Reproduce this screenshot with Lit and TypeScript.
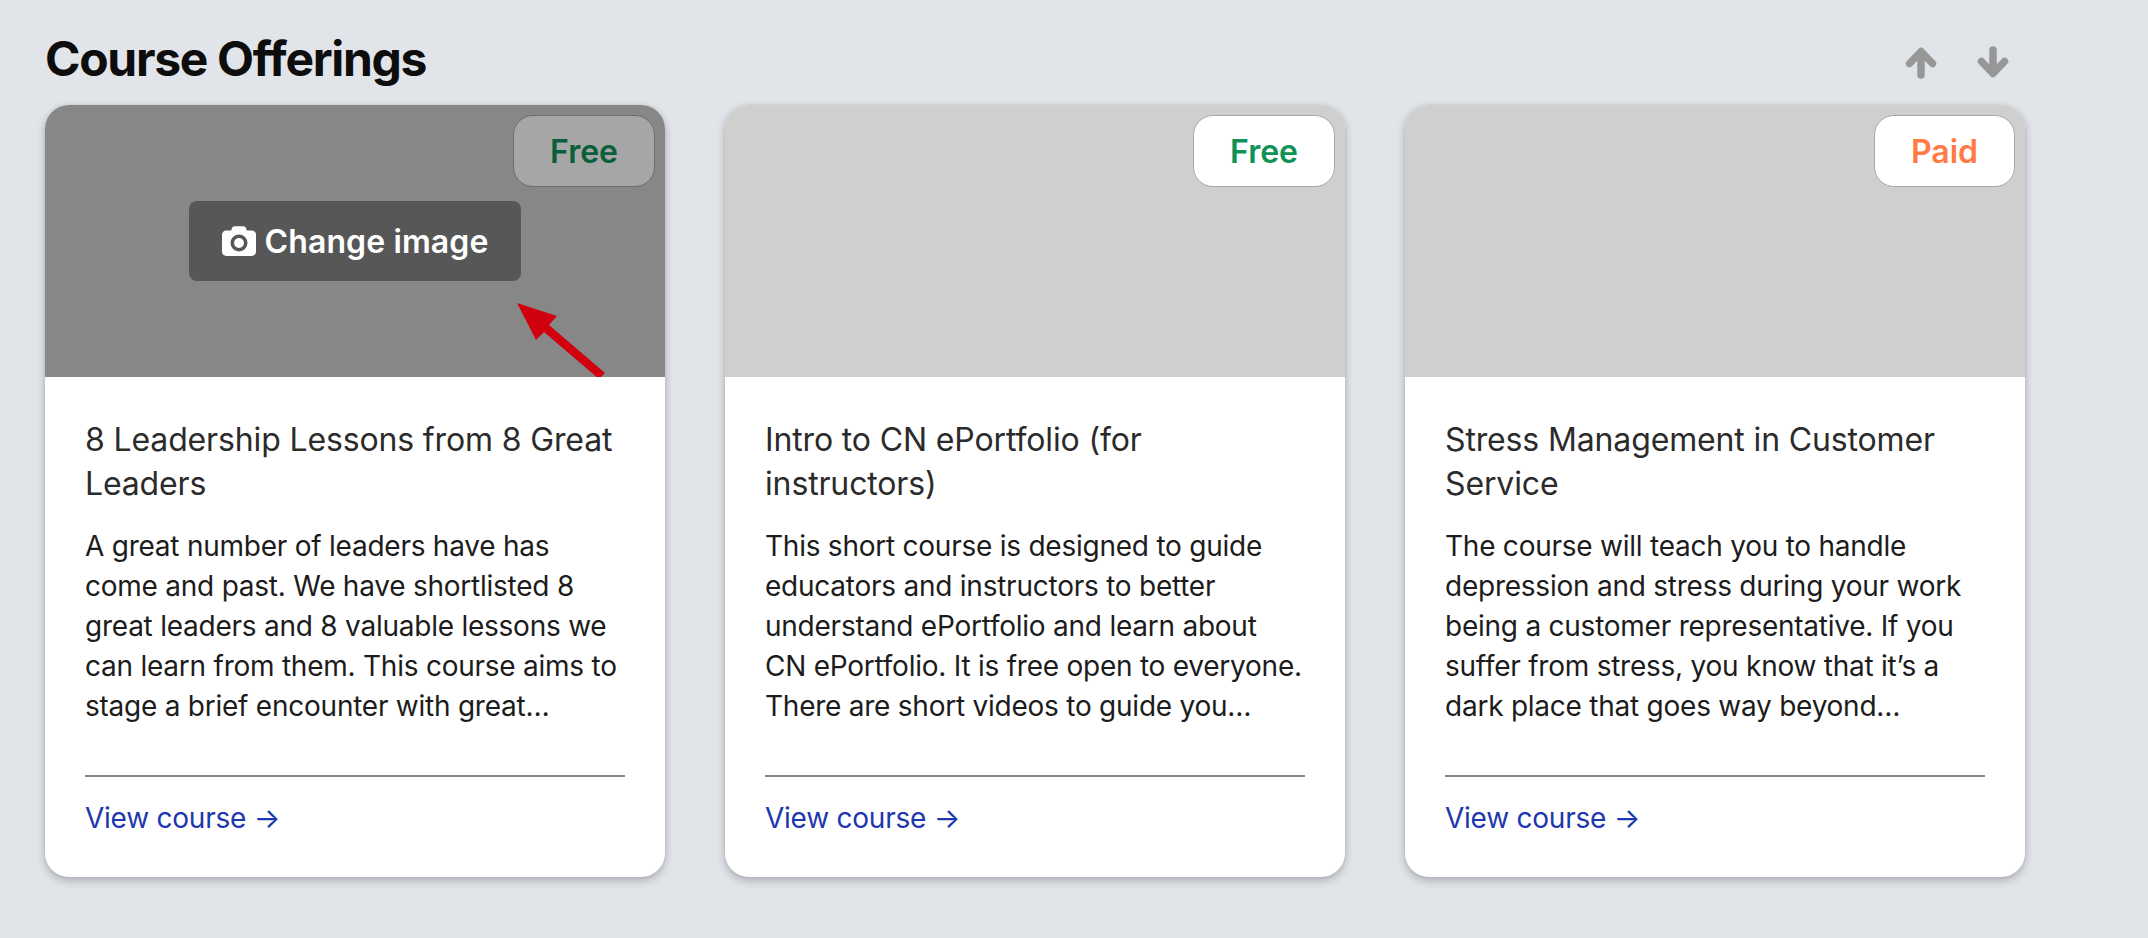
import { LitElement, html, css, svg } from "lit";
import { customElement } from "lit/decorators.js";

interface Course {
  title: string;
  desc: string;
  badge: "Free" | "Paid";
  overlay?: boolean;
}

const COURSES: Course[] = [
  {
    title: "8 Leadership Lessons from 8 Great Leaders",
    desc: "A great number of leaders have has come and past. We have shortlisted 8 great leaders and 8 valuable lessons we can learn from them. This course aims to stage a brief encounter with great\u2026",
    badge: "Free",
    overlay: true,
  },
  {
    title: "Intro to CN ePortfolio (for instructors)",
    desc: "This short course is designed to guide educators and instructors to better understand ePortfolio and learn about CN ePortfolio. It is free open to everyone. There are short videos to guide you\u2026",
    badge: "Free",
  },
  {
    title: "Stress Management in Customer Service",
    desc: "The course will teach you to handle depression and stress during your work being a customer representative. If you suffer from stress, you know that it\u2019s a dark place that goes way beyond\u2026",
    badge: "Paid",
  },
];

const arrowUp = svg`<path d="M16 28V6M4.500 16.500 16 4.500l11.500 12" fill="none" stroke="currentColor" stroke-width="7.500" stroke-linecap="round" stroke-linejoin="round"/>`;

@customElement("app-root")
export class AppRoot extends LitElement {
  static styles = css`
    :host {
      display: block;
      min-height: 938px;
      box-sizing: border-box;
      background: #e1e4e9;
      font-family: Inter, "Liberation Sans", sans-serif;
      padding-left: 45px;
    }
    .head {
      width: 1980px;
      height: 105px;
      display: flex;
      align-items: flex-start;
      justify-content: space-between;
    }
    h1 {
      margin: 0;
      padding-top: 31px;
      font-size: 48px;
      line-height: 56px;
      font-weight: 700;
      letter-spacing: -1.3px;
      color: #0d0d0d;
    }
    .order {
      display: flex;
      gap: 40px;
      padding: 47px 16px 0 0;
      color: #979797;
    }
    .order svg {
      display: block;
      width: 32px;
      height: 32px;
    }
    .order .down {
      transform: rotate(180deg) translateY(1px);
    }
    .grid {
      display: grid;
      grid-template-columns: repeat(3, 620px);
      gap: 60px;
    }
    .card {
      background: #fff;
      border-radius: 24px;
      overflow: hidden;
      box-shadow: 0 4px 10px rgba(0, 0, 0, 0.22), 0 0 4px rgba(0, 0, 0, 0.08);
      display: flex;
      flex-direction: column;
    }
    .media {
      position: relative;
      height: 272px;
      background: #cfcfcf;
    }
    .badge {
      position: absolute;
      top: 10px;
      right: 10px;
      height: 72px;
      box-sizing: border-box;
      padding: 1px 36px 0;
      display: flex;
      align-items: center;
      background: #fff;
      border: 1px solid #a8a8a8;
      border-radius: 20px;
      font-size: 32px;
      font-weight: 600;
    }
    .free {
      color: #0e9258;
    }
    .paid {
      color: #ff7a45;
    }
    .overlay {
      position: absolute;
      inset: 0;
      background: rgba(0, 0, 0, 0.35);
      display: flex;
      align-items: center;
      justify-content: center;
    }
    .change {
      width: 332px;
      height: 80px;
      box-sizing: border-box;
      display: flex;
      align-items: center;
      justify-content: center;
      gap: 9px;
      border-radius: 8px;
      background: #575757;
      color: #fff;
      font-size: 32px;
      font-weight: 600;
      letter-spacing: 0.1px;
    }
    .change svg {
      width: 34px;
      height: 30px;
      display: block;
    }
    .pointer {
      position: absolute;
      left: 460px;
      top: 190px;
      width: 101px;
      height: 82px;
    }
    .body {
      padding: 41px 40px 39px;
      display: flex;
      flex-direction: column;
      flex: 1;
    }
    h2 {
      margin: 0 0 20px;
      font-size: 32px;
      line-height: 44px;
      font-weight: 400;
      letter-spacing: -0.14px;
      color: #2b2b2b;
    }
    p {
      margin: 0;
      font-size: 28px;
      line-height: 40px;
      letter-spacing: -0.24px;
      color: #1c1c1c;
    }
    hr {
      margin: 49px 0 21px;
      height: 2px;
      border: 0;
      background: #868386;
    }
    .view {
      font-size: 28px;
      line-height: 40px;
      letter-spacing: -0.24px;
      color: #1e36ae;
      text-decoration: none;
    }
  `;

  private renderCard(c: Course) {
    return html`<article class="card">
      <div class="media">
        <div class="badge ${c.badge === "Free" ? "free" : "paid"}">${c.badge}</div>
        ${c.overlay
          ? html`<div class="overlay">
                <div class="change">
                  <svg viewBox="0 0 512 448" aria-hidden="true">
                    <path
                      fill="currentColor"
                      fill-rule="evenodd"
                      d="M149 33 139 64H64C29 64 0 93 0 128v256c0 35 29 64 64 64h384c35 0 64-29 64-64V128c0-35-29-64-64-64h-75l-10-31C358 13 340 0 319 0H193c-21 0-39 13-44 33zM256 126a128 128 0 1 1 0 256 128 128 0 1 1 0-256z"
                    />
                    <circle cx="256" cy="254" r="74" fill="currentColor" />
                  </svg>
                  Change image
                </div>
              </div>
              <svg class="pointer" viewBox="0 0 101 82" aria-hidden="true">
                <path fill="#d0000e" d="M12 8 52 21 44 30 100 78 94 84 39 37 31 45z" />
              </svg>`
          : ""}
      </div>
      <div class="body">
        <h2>${c.title}</h2>
        <p>${c.desc}</p>
        <hr />
        <a class="view" href="#">View course →</a>
      </div>
    </article>`;
  }

  render() {
    return html`
      <header class="head">
        <h1>Course Offerings</h1>
        <div class="order">
          <svg viewBox="0 0 32 32" aria-hidden="true">${arrowUp}</svg>
          <svg class="down" viewBox="0 0 32 32" aria-hidden="true">${arrowUp}</svg>
        </div>
      </header>
      <section class="grid">${COURSES.map((c) => this.renderCard(c))}</section>
    `;
  }
}
